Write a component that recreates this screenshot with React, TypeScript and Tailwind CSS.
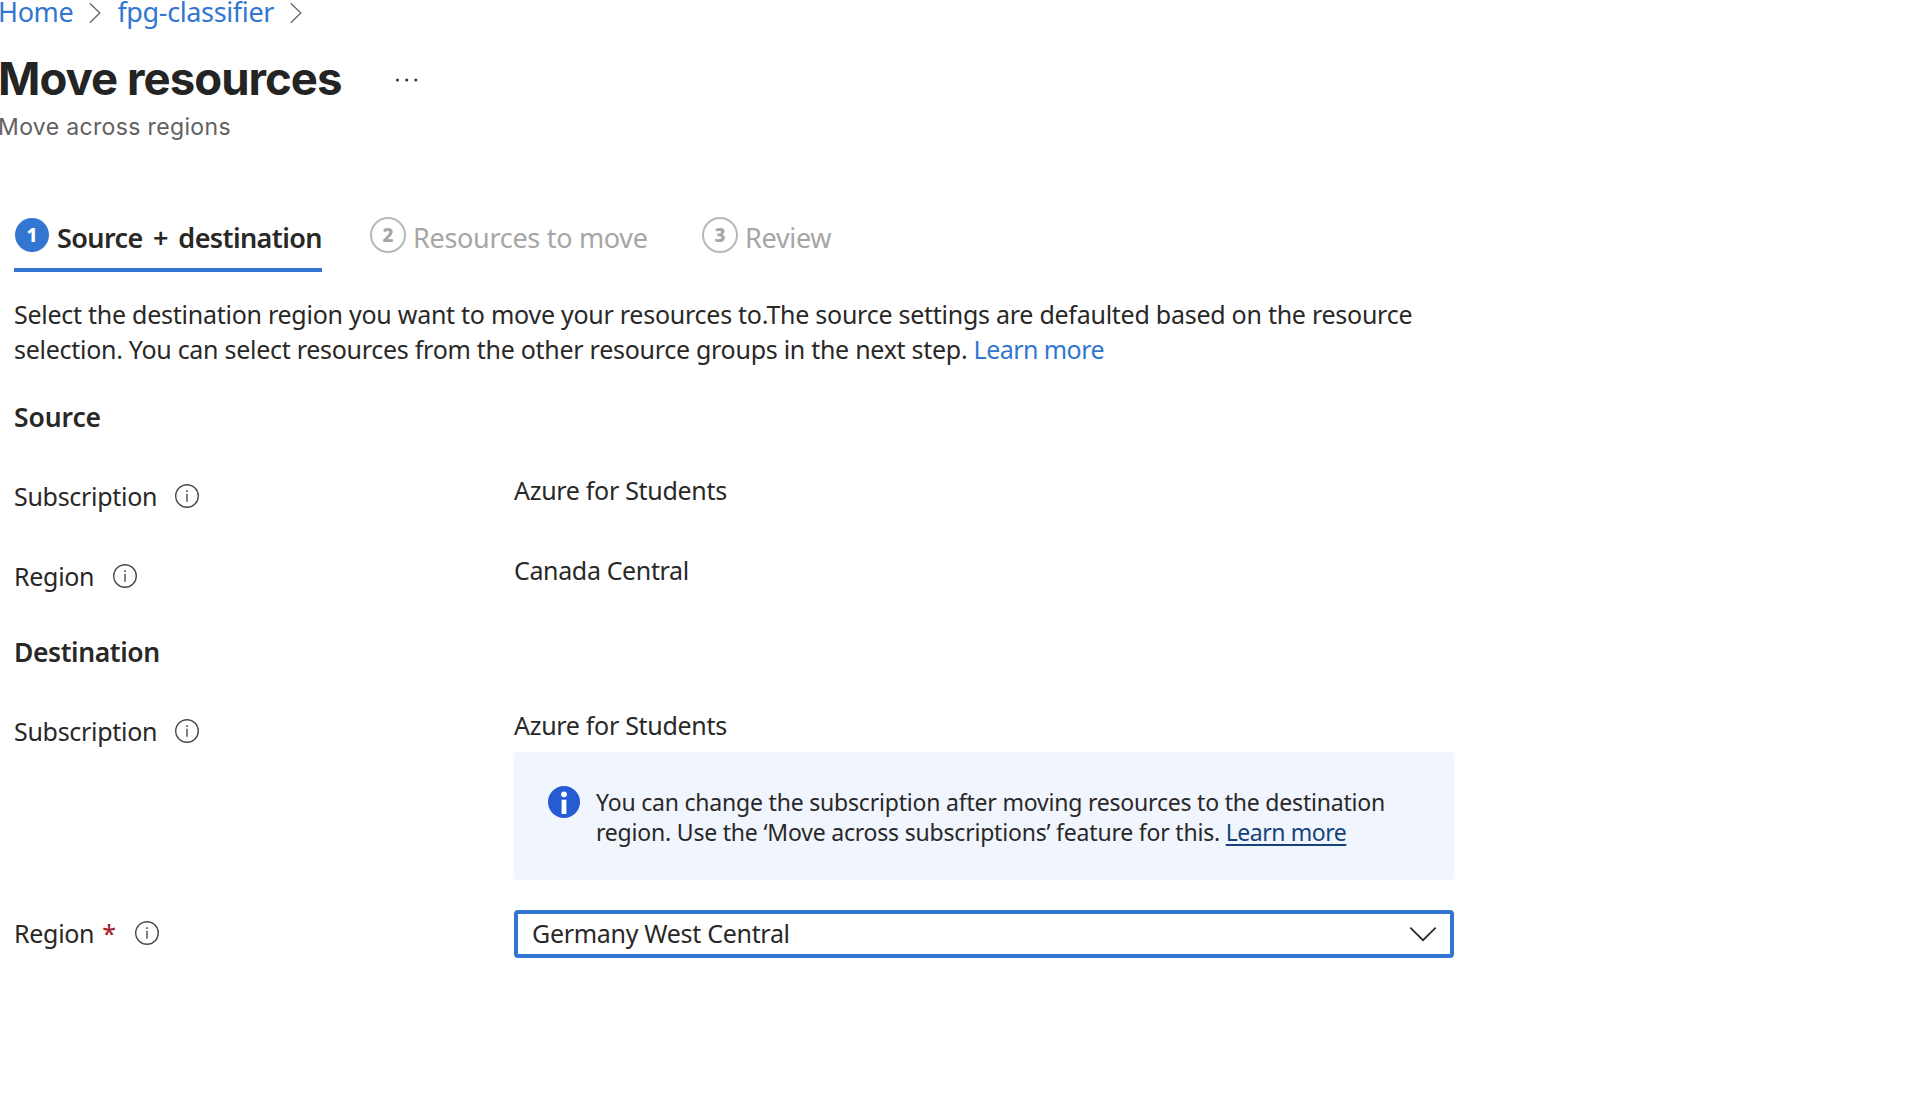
import type { ReactNode } from "react";

function InfoIcon() {
  return (
    <svg className="mb-[2px] size-6 shrink-0" viewBox="0 0 24 24" fill="none" stroke="#4a4a4a">
      <circle cx="12" cy="12" r="11.3" strokeWidth="1.4" />
      <path d="M12 9.8V17.8" strokeWidth="1.4" />
      <path d="M12 6.3V8" strokeWidth="1.6" />
    </svg>
  );
}

function Crumb({ children }: { children: ReactNode }) {
  return (
    <a className="text-[27px] leading-[23px] text-[#3276d2]">{children}</a>
  );
}

function CrumbChevron() {
  return (
    <svg className="h-[22px] w-3 shrink-0" viewBox="0 0 12 22" fill="none" stroke="#666" strokeWidth="1.3">
      <path d="M0.8 1.2L10.8 11L0.8 20.8" />
    </svg>
  );
}

function Tab({ step, label, active, className }: { step: number; label: string; active?: boolean; className: string }) {
  return (
    <div
      className={
        (active
          ? "border-[#3276d2] font-semibold text-[#292827] tracking-[-0.6px] [word-spacing:4px] "
          : "border-transparent text-[#a6a6a6] tracking-[-0.3px] ") +
        "flex h-[66px] items-center border-b-4 text-[27px] " +
        className
      }
    >
      <span
        className={
          (active ? "size-[34px] bg-[#3276d2] text-white " : "size-9 border-2 border-[#b8b8b8] text-[#a6a6a6] ") +
          "mb-1 flex shrink-0 items-center justify-center rounded-full text-[19px] leading-none font-extrabold tracking-normal"
        }
      >
        {step}
      </span>
      <span className="mt-[2px]">{label}</span>
    </div>
  );
}

function Label({ text, required, gap }: { text: string; required?: boolean; gap: string }) {
  return (
    <div className={"flex h-[50px] w-[500px] shrink-0 items-center " + gap}>
      <span>
        {text}
        {required && <span className="ml-2 font-medium text-[#a4262c]">*</span>}
      </span>
      <InfoIcon />
    </div>
  );
}

export default function App() {
  return (
    <div className="h-[1094px] w-full overflow-hidden bg-white font-['Noto_Sans',sans-serif] text-[25px] tracking-[-0.3px] text-[#292827]">
      <nav className="-ml-[2px] flex h-[23px] items-center tracking-[-0.36px]">
        <Crumb>Home</Crumb>
        <div className="mt-[3px] ml-4 flex"><CrumbChevron /></div>
        <div className="ml-4 flex"><Crumb>fpg-classifier</Crumb></div>
        <div className="mt-[3px] ml-4 flex"><CrumbChevron /></div>
      </nav>

      <header className="font-['Inter',sans-serif]">
        <div className="mt-7 -ml-[2px] flex h-14 items-center">
          <h1 className="text-[45.5px] font-bold tracking-[-0.95px] text-[#242424]">Move resources</h1>
          <svg className="mt-[2px] ml-[53px] h-1 w-6" viewBox="0 0 24 4" fill="#333">
            <circle cx="2.5" cy="2" r="1.5" />
            <circle cx="11.7" cy="2" r="1.5" />
            <circle cx="20.8" cy="2" r="1.5" />
          </svg>
        </div>
        <p className="mt-[5px] -ml-[2px] h-[30px] text-[23px] leading-[30px] tracking-[0.35px] text-[#616161]">
          Move across regions
        </p>
      </header>

      <main className="pl-[14px]">
        <div className="mt-16 flex">
          <Tab step={1} label="Source + destination" active className="w-[308px] gap-2 pl-[1px] whitespace-nowrap" />
          <Tab step={2} label="Resources to move" className="ml-12 w-[332px] gap-[7px]" />
          <Tab step={3} label="Review" className="gap-[7px]" />
        </div>

        <p className="mt-[25px] leading-[35px] whitespace-nowrap">
          <span className="tracking-[-0.26px]">
            Select the destination region you want to move your resources to.The source settings are defaulted based on the resource
          </span>
          <br />
          <span className="tracking-[-0.28px]">
            selection. You can select resources from the other resource groups in the next step.{" "}
          </span>
          <a className="tracking-[-0.55px] text-[#3276d2]">Learn more</a>
        </p>

        <h2 className="mt-8 h-9 text-[26.5px] leading-9 font-semibold tracking-[-0.1px]">Source</h2>
        <div className="mt-[37px] flex h-20">
          <Label text="Subscription" gap="gap-[18px]" />
          <div className="h-9 leading-9">Azure for Students</div>
        </div>
        <div className="flex h-20">
          <Label text="Region" gap="gap-[19px]" />
          <div className="h-9 leading-9 tracking-[-0.36px]">Canada Central</div>
        </div>

        <h2 className="mt-[2px] h-9 text-[26.5px] leading-9 font-semibold tracking-[-0.4px]">Destination</h2>
        <div className="mt-[37px] flex">
          <Label text="Subscription" gap="gap-[18px]" />
          <div className="w-[940px]">
            <div className="h-9 leading-9">Azure for Students</div>
            <div className="mt-[9px] flex h-32 rounded-[4px] bg-[#f0f5fe] pt-[34px] pl-[34px]">
              <svg className="size-8 shrink-0" viewBox="0 0 32 32">
                <circle cx="16" cy="16" r="16" fill="#255bd3" />
                <circle cx="16" cy="8.3" r="2.9" fill="#fff" />
                <path d="M13.6 13.7H18.4V28H13.6Z" fill="#fff" />
              </svg>
              <p className="mt-[1px] ml-4 text-[23px] leading-[30px] tracking-[-0.2px] whitespace-nowrap">
                You can change the subscription after moving resources to the destination
                <br />
                region. Use the ‘Move across subscriptions’ feature for this.{" "}
                <a className="tracking-[-0.45px] text-[#15437a] underline decoration-2 underline-offset-[3px]">Learn more</a>
              </p>
            </div>
          </div>
        </div>

        <div className="mt-[30px] flex h-12 items-center">
          <Label text="Region" required gap="gap-[19px]" />
          <div className="flex h-12 w-[940px] items-center justify-between rounded-[4px] border-4 border-[#3276d2] pr-[13px] pl-[14px]">
            <span>Germany West Central</span>
            <svg className="h-4 w-7" viewBox="0 0 28 16" fill="none" stroke="#292827" strokeWidth="1.7">
              <path d="M1.3 1.6L14 14.2L26.7 1.6" />
            </svg>
          </div>
        </div>
      </main>
    </div>
  );
}
